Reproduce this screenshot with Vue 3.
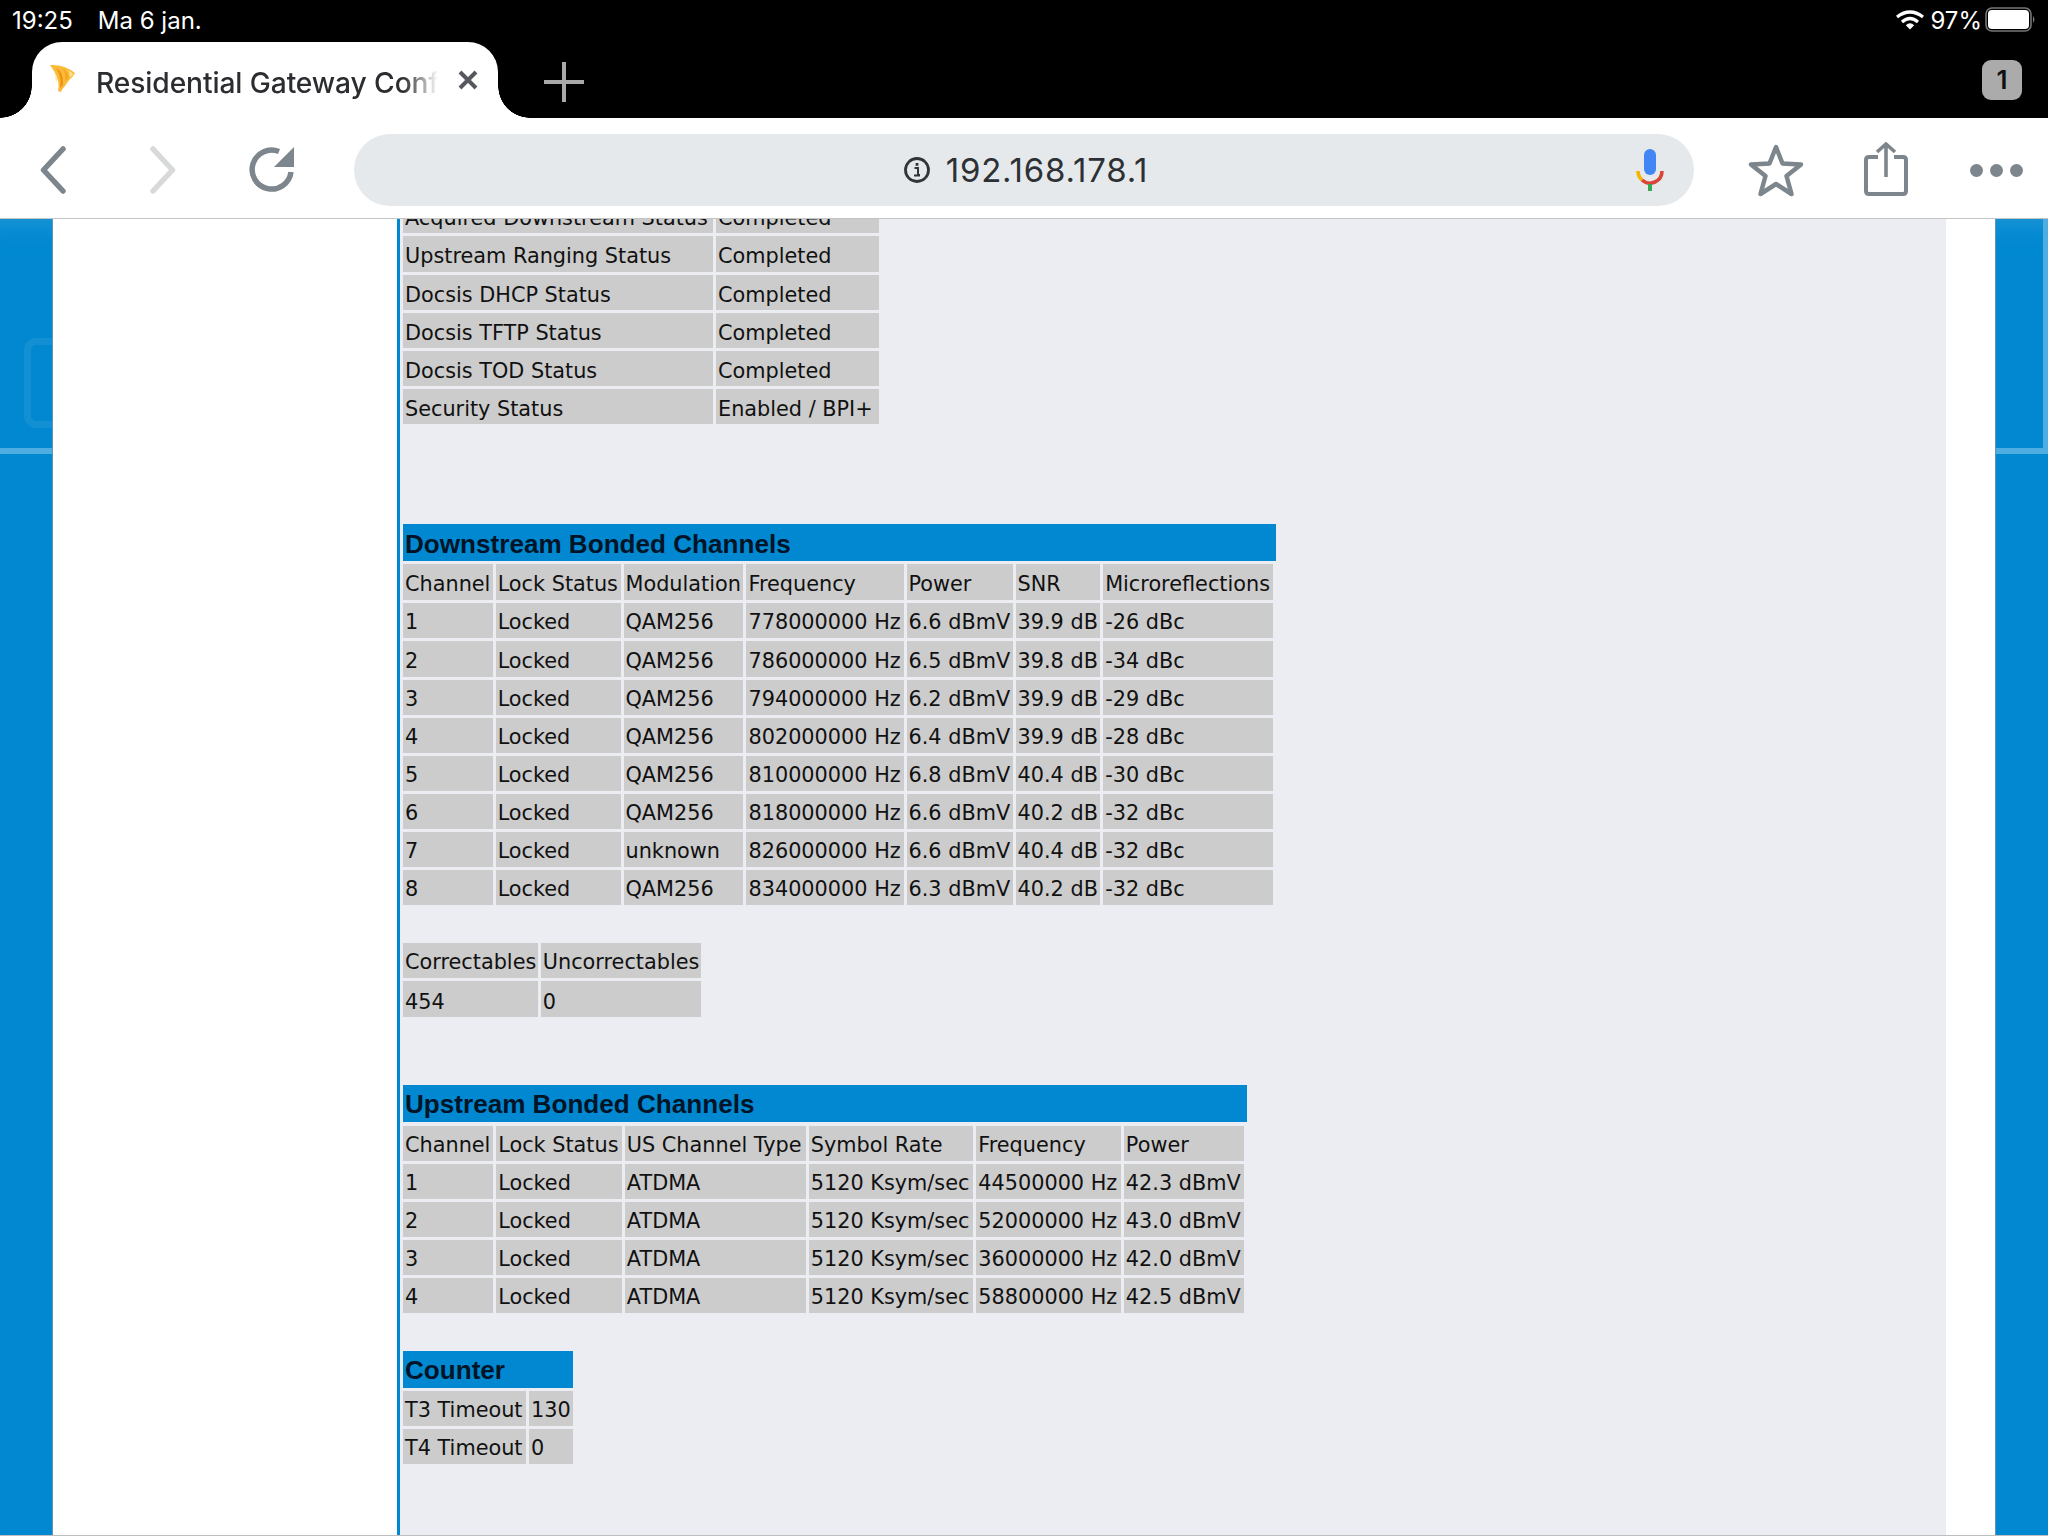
<script setup>
const statusRows = [
  ['Acquired Downstream Status', 'Completed'],
  ['Upstream Ranging Status', 'Completed'],
  ['Docsis DHCP Status', 'Completed'],
  ['Docsis TFTP Status', 'Completed'],
  ['Docsis TOD Status', 'Completed'],
  ['Security Status', 'Enabled / BPI+'],
]
const downHead = ['Channel', 'Lock Status', 'Modulation', 'Frequency', 'Power', 'SNR', 'Microreflections']
const downRows = [
  ['1', 'Locked', 'QAM256', '778000000 Hz', '6.6 dBmV', '39.9 dB', '-26 dBc'],
  ['2', 'Locked', 'QAM256', '786000000 Hz', '6.5 dBmV', '39.8 dB', '-34 dBc'],
  ['3', 'Locked', 'QAM256', '794000000 Hz', '6.2 dBmV', '39.9 dB', '-29 dBc'],
  ['4', 'Locked', 'QAM256', '802000000 Hz', '6.4 dBmV', '39.9 dB', '-28 dBc'],
  ['5', 'Locked', 'QAM256', '810000000 Hz', '6.8 dBmV', '40.4 dB', '-30 dBc'],
  ['6', 'Locked', 'QAM256', '818000000 Hz', '6.6 dBmV', '40.2 dB', '-32 dBc'],
  ['7', 'Locked', 'unknown', '826000000 Hz', '6.6 dBmV', '40.4 dB', '-32 dBc'],
  ['8', 'Locked', 'QAM256', '834000000 Hz', '6.3 dBmV', '40.2 dB', '-32 dBc'],
]
const upHead = ['Channel', 'Lock Status', 'US Channel Type', 'Symbol Rate', 'Frequency', 'Power']
const upRows = [
  ['1', 'Locked', 'ATDMA', '5120 Ksym/sec', '44500000 Hz', '42.3 dBmV'],
  ['2', 'Locked', 'ATDMA', '5120 Ksym/sec', '52000000 Hz', '43.0 dBmV'],
  ['3', 'Locked', 'ATDMA', '5120 Ksym/sec', '36000000 Hz', '42.0 dBmV'],
  ['4', 'Locked', 'ATDMA', '5120 Ksym/sec', '58800000 Hz', '42.5 dBmV'],
]
</script>

<template>
  <div class="screen">
    <header class="chrome">
      <div class="status">
        <div class="status-left"><span>19:25</span><span>Ma 6 jan.</span></div>
        <div class="status-right">
          <svg class="wifi" width="28" height="20" viewBox="0 0 28 20">
            <path d="M1 7 Q14 -3 27 7" fill="none" stroke="#fff" stroke-width="3.2"/>
            <path d="M6 12 Q14 5 22 12" fill="none" stroke="#fff" stroke-width="3.2"/>
            <path d="M9.8 15.2 Q14 11.5 18.2 15.2 L14 19.6 Z" fill="#fff"/>
          </svg>
          <span class="pct">97%</span>
          <svg width="52" height="26" viewBox="0 0 52 26">
            <rect x="1" y="1" width="45" height="23" rx="6" fill="none" stroke="#777" stroke-width="1.6"/>
            <rect x="3" y="3" width="41" height="19" rx="4" fill="#fff"/>
            <path d="M48 9 Q51 12.5 48 16 Z" fill="#777"/>
          </svg>
        </div>
      </div>
      <div class="tabstrip">
        <div class="tab">
          <svg class="favicon" width="26" height="30" viewBox="0 0 26 30">
            <path d="M0 1 Q14 0 25 9 Q23 13 20 15 Q17 19 15 22 Q12 25 11 28 L8 27 Q10 19 6 12 Q4 6 0 1 Z" fill="#fbbb3a"/>
            <path d="M6 4 Q14 8 13 21 L10 24 Q12 13 6 4 Z" fill="#ee9414"/>
            <path d="M12 4 Q19 8 18 15 L15 17 Q17 10 12 4 Z" fill="#f6a51f"/>
            <path d="M18 6 Q23 9 23 11 L20 13 Q20 9 18 6 Z" fill="#fde29a"/>
            <path d="M3 5 Q8 12 7 18 L5.500 17 Q6 11 3 5 Z" fill="#fde9b6"/>
          </svg>
          <span class="tab-title">Residential Gateway Conf</span>
          <svg width="20" height="20" viewBox="0 0 20 20"><path d="M2 2 L18 18 M18 2 L2 18" stroke="#55595e" stroke-width="4"/></svg>
        </div>
        <svg class="plus" width="40" height="40" viewBox="0 0 40 40"><path d="M20 0 V40 M0 20 H40" stroke="#a9a9a9" stroke-width="4"/></svg>
        <div class="count">1</div>
      </div>
      <div class="toolbar">
        <div class="nav">
          <svg width="26" height="48" viewBox="0 0 26 48"><path d="M23 3 L3.500 24 L23 45" fill="none" stroke="#7c868c" stroke-width="5.500" stroke-linecap="round" stroke-linejoin="round"/></svg>
          <svg width="26" height="48" viewBox="0 0 26 48"><path d="M3 3 L22.500 24 L3 45" fill="none" stroke="#d7d9da" stroke-width="5.500" stroke-linecap="round" stroke-linejoin="round"/></svg>
          <svg width="46" height="46" viewBox="0 0 46 46">
            <path d="M42 25 A19.500 19.500 0 1 1 30 4.500" fill="none" stroke="#7c868c" stroke-width="5.500"/>
            <path d="M45 0 V20 H25 Z" fill="#7c868c"/>
          </svg>
        </div>
        <div class="omnibox">
          <div class="url">
            <svg width="28" height="28" viewBox="0 0 28 28">
              <circle cx="14" cy="14" r="11.500" fill="none" stroke="#30353a" stroke-width="2.800"/>
              <path d="M11.500 12 H15 V19 H17 M11 19.500 H17" fill="none" stroke="#30353a" stroke-width="2"/>
              <rect x="12.600" y="7" width="2.800" height="2.800" fill="#30353a"/>
            </svg>
            <span>192.168.178.1</span>
          </div>
          <svg class="mic" width="28" height="42" viewBox="0 0 28 42">
            <rect x="8" y="0" width="12" height="26" rx="6" fill="#4285f4"/>
            <path d="M2 22 A12 12 0 0 0 6 31" fill="none" stroke="#f4b400" stroke-width="3.600"/>
            <path d="M6 31 A12 12 0 0 0 26 22" fill="none" stroke="#db4437" stroke-width="3.600"/>
            <rect x="12" y="35" width="4" height="7" fill="#34a853"/>
          </svg>
        </div>
        <div class="actions">
          <svg width="56" height="54" viewBox="0 0 56 54"><path d="M28 4 L34.500 20.500 L53 21.500 L38.500 33 L43.500 51 L28 41 L12.500 51 L17.500 33 L3 21.500 L21.500 20.500 Z" fill="none" stroke="#7c868c" stroke-width="4.500" stroke-linejoin="round"/></svg>
          <svg class="share" width="44" height="54" viewBox="0 0 44 54">
            <path d="M14 15 H5 Q2 15 2 18 V49 Q2 52 5 52 H39 Q42 52 42 49 V18 Q42 15 39 15 H30" fill="none" stroke="#7c868c" stroke-width="4"/>
            <path d="M22 35 V3 M13 10 L22 2 L31 10" fill="none" stroke="#7c868c" stroke-width="3.600"/>
          </svg>
          <div class="dots"><i></i><i></i><i></i></div>
        </div>
      </div>
    </header>

    <div class="page">
      <div class="rail left-rail"><span class="rail-box"></span><span class="rail-line"></span></div>
      <div class="sidebar"></div>
      <main class="main">
        <div class="scrolled">
          <table class="grid status-table"><tbody>
            <tr v-for="r in statusRows" :key="r[0]"><td v-for="c in r" :key="c">{{ c }}</td></tr>
          </tbody></table>

          <section class="sec sec-down">
            <h2 class="bar">Downstream Bonded Channels</h2>
            <table class="grid down-table"><tbody>
              <tr><td v-for="c in downHead" :key="c">{{ c }}</td></tr>
              <tr v-for="r in downRows" :key="r[0]"><td v-for="(c, i) in r" :key="i">{{ c }}</td></tr>
            </tbody></table>
          </section>

          <table class="grid errs"><tbody>
            <tr><td>Correctables</td><td>Uncorrectables</td></tr>
            <tr><td>454</td><td>0</td></tr>
          </tbody></table>

          <section class="sec sec-up">
            <h2 class="bar">Upstream Bonded Channels</h2>
            <table class="grid"><tbody>
              <tr><td v-for="c in upHead" :key="c">{{ c }}</td></tr>
              <tr v-for="r in upRows" :key="r[0]"><td v-for="(c, i) in r" :key="i">{{ c }}</td></tr>
            </tbody></table>
          </section>

          <section class="sec sec-count">
            <h2 class="bar">Counter</h2>
            <table class="grid count-table"><tbody>
              <tr><td>T3 Timeout</td><td>130</td></tr>
              <tr><td>T4 Timeout</td><td>0</td></tr>
            </tbody></table>
          </section>
        </div>
      </main>
      <div class="gutter"></div>
      <div class="rail right-rail"><span class="rail-vline"></span><span class="rail-line"></span></div>
    </div>
  </div>
</template>

<style>
html, body { margin: 0; background: #000; }
</style>

<style scoped>
.screen { width: 2048px; height: 1536px; display: flex; flex-direction: column; overflow: hidden; background: #fff; }
.chrome { flex: none; background: #000; }
.status { height: 42px; display: flex; justify-content: space-between; align-items: center; padding: 0 11px 2px 12px; color: #fff; font: 24px Inter, "Noto Sans", sans-serif; box-sizing: border-box; }
.status-left { display: flex; gap: 25px; }
.status-right { display: flex; align-items: center; gap: 8px; }
.wifi { margin-right: -2px; }
.pct { margin-right: -5px; }
.tabstrip { height: 76px; display: flex; align-items: flex-start; padding-left: 32px; position: relative; }
.tab { width: 466px; height: 76px; box-sizing: border-box; background: #fff; border-radius: 30px 30px 0 0; display: flex; align-items: center; padding: 0 20px 0 18px; position: relative; }
.tab::before, .tab::after { content: ""; position: absolute; bottom: 0; width: 32px; height: 32px; background: radial-gradient(circle at var(--c) 0, #000 31.500px, #fff 32px); }
.tab::before { left: -32px; --c: 0; }
.tab::after { right: -32px; --c: 32px; }
.favicon { flex: none; margin-right: 20px; margin-bottom: 3px; filter: blur(0.6px); }
.tab-title { flex: 1; font: 500 28.200px Inter, "Noto Sans", sans-serif; color: #2b2d30; white-space: nowrap; overflow: hidden; letter-spacing: -0.1px; -webkit-mask-image: linear-gradient(90deg, #000 90%, transparent 100%); mask-image: linear-gradient(90deg, #000 90%, transparent 100%); margin-right: 20px; padding-top: 5px; }
.plus { margin: 20px 0 0 46px; }
.count { margin: 18px 26px 0 auto; width: 40px; height: 40px; background: #ababab; border-radius: 9px; color: #111; font: 600 26px/40px Inter, sans-serif; text-align: center; }
.toolbar { height: 101px; box-sizing: border-box; background: #fff; border-bottom: 1px solid #c4c4c4; padding-top: 4px; display: flex; align-items: center; }
.nav { display: flex; align-items: center; padding-left: 40px; width: 354px; box-sizing: border-box; }
.nav svg:nth-child(2) { margin-left: 84px; }
.nav svg:nth-child(3) { margin-left: 73px; }
.omnibox { width: 1340px; height: 72px; border-radius: 36px; background: #e6e9eb; display: flex; align-items: center; justify-content: center; position: relative; }
.url { display: flex; align-items: center; gap: 15px; font: 33px Inter, "Noto Sans", sans-serif; letter-spacing: 0.8px; color: #2d3135; margin-left: 3px; }
.mic { position: absolute; right: 30px; top: 15px; }
.actions { display: flex; align-items: center; padding-left: 54px; }
.share { margin-left: 60px; margin-top: -2px; }
.dots { display: flex; gap: 7px; margin-left: 62px; }
.dots i { width: 13px; height: 13px; border-radius: 50%; background: #7c868c; }

.page { flex: 1; min-height: 0; display: flex; border-bottom: 1px solid #bdbdbd; }
.rail { flex: none; width: 53px; box-sizing: border-box; background: #0188d1; position: relative; box-shadow: inset 0 30px 30px -30px #2c9cd8; }
.rail-box { position: absolute; left: 24px; top: 119px; width: 28px; height: 90px; box-sizing: border-box; border: 7px solid #138fd4; border-right: 0; border-radius: 12px 0 0 12px; }
.rail-line { position: absolute; left: 0; right: 0; top: 229px; height: 6px; background: #4fade1; }
.right-rail .rail-vline { position: absolute; right: 0; top: 0; width: 5px; height: 229px; background: #4fade1; }
.right-rail { border-left: 1px solid #5f95b5; }
.left-rail { border-right: 1px solid #5f95b5; }
.sidebar { flex: none; width: 344px; background: #fff; }
.main { flex: none; width: 1549px; box-sizing: border-box; background: #ecedf3; border-left: 3px solid #0188d1; overflow: hidden; }
.gutter { flex: none; width: 49px; background: #fff; }
.scrolled { margin-top: -21px; padding-left: 3px; display: flex; flex-direction: column; align-items: flex-start; }
.grid { border-collapse: separate; border-spacing: 3px; margin: -3px 0 0 -3px; font: 20.800px "DejaVu Sans", Verdana, sans-serif; color: #111; }
.grid td { box-sizing: border-box; background: #ccc; padding: 3.500px 1.500px 0 2px; height: 35px; white-space: nowrap; text-align: left; }
.status-table td { padding-top: 4px; }
.status-table tr:nth-child(n+5) td { padding-top: 5px; }
.status-table td:first-child { min-width: 310px; }
.status-table td:last-child { min-width: 163px; }
.count-table td:first-child { min-width: 123px; }
.count-table td:last-child { min-width: 44px; }
.status-table tr:nth-child(2) td { height: 36px; }
.down-table tr:nth-child(1) td, .down-table tr:nth-child(3) td { height: 36px; }
.errs tr:nth-child(2) td { height: 36px; padding-top: 5px; }
.sec { display: flex; flex-direction: column; align-items: stretch; }
.bar { margin: 0 0 3px; height: 37px; box-sizing: border-box; padding: 2px 0 0 2px; background: #0188d1; color: #001428; font: bold 26.100px/37px "Liberation Sans", Arial, sans-serif; }
.sec-down { margin-top: 97px; }
.sec-down .bar { width: 873px; }
.errs { margin-top: 32px; }
.sec-up { margin-top: 65px; }
.sec-up .bar { width: 844px; margin-bottom: 4px; padding-top: 1px; }
.sec-count { margin-top: 35px; }
.sec-count .bar { width: 170px; padding-top: 1px; }
</style>
